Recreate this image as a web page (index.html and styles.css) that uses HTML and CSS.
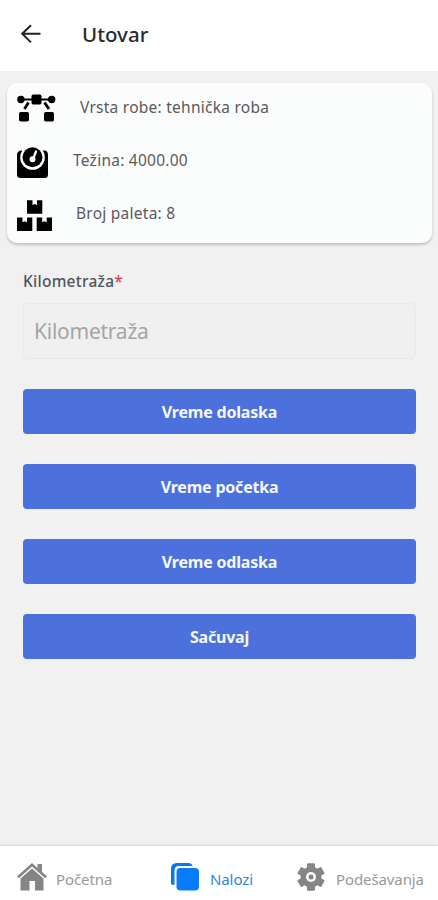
FILE: index.html
```html
<!DOCTYPE html>
<html lang="sr">
<head>
<meta charset="utf-8">
<meta name="viewport" content="width=device-width, initial-scale=1">
<title>Utovar</title>
<link rel="stylesheet" href="styles.css">
</head>
<body>
<div class="app">
  <header class="topbar">
    <svg class="back" width="22" height="20" viewBox="0 0 22 20"><path d="M11 1.2 2.2 9.8 11 18.4M2.5 9.8H20.5" fill="none" stroke="#222" stroke-width="2"/></svg>
    <h1 class="title">Utovar</h1>
  </header>
  <main class="content">
    <section class="card">
      <div class="info">
        <svg class="route" width="40" height="28" viewBox="0 0 40 28"><g stroke="#000" stroke-width="2"><path d="M4 5.500H36"/><path d="M11.500 8.500 7.500 15M27.500 8.500 32 15" stroke-width="2.800"/></g><circle cx="3.900" cy="5.500" r="3.700"/><circle cx="34.700" cy="5.500" r="3.700"/><rect x="14.500" y=".5" width="10" height="10" rx="1.700"/><rect x="2" y="18" width="10" height="9.500" rx="1.700"/><rect x="27" y="18" width="10" height="9.500" rx="1.700"/></svg>
        <span class="cargo">Vrsta robe: tehnička roba</span>
      </div>
      <div class="info">
        <svg width="32" height="32" viewBox="0 0 32 32"><path d="M4 3.500H28Q31 4 31 8V27.500Q31 31 27.500 31H3.500Q0 31 0 27.500V8Q0 4 4 3.500Z"/><circle cx="15.500" cy="10.500" r="12.300" fill="#fbfcfc"/><path d="M5 0H26V4H5Z" fill="#fbfcfc"/><circle cx="15.500" cy="10.200" r="10"/><path d="M19 4.500 16.500 11" stroke="#fbfcfc" stroke-width="2.200" stroke-linecap="round"/><circle cx="15.500" cy="12.200" r="3" fill="#fbfcfc"/></svg>
        <span class="weight">Težina: 4000.00</span>
      </div>
      <div class="info">
        <svg width="36" height="32" viewBox="0 0 36 32"><path d="M10 .3H15.500V5L17.700 4 20 5V.3H25.300V13.700H10ZM0 17.600H5.500V22.300L7.700 21.300 10 22.300V17.600H15.300V31H0ZM19.700 17.600H25.200V22.300L27.400 21.300 29.700 22.300V17.600H35V31H19.700Z"/></svg>
        <span class="pallets">Broj paleta: 8</span>
      </div>
    </section>
    <form class="form">
      <label class="label" for="km">Kilometraža<span class="required">*</span></label>
      <input class="input" id="km" type="text" placeholder="Kilometraža">
      <button class="button" type="button">Vreme dolaska</button>
      <button class="button" type="button">Vreme početka</button>
      <button class="button" type="button">Vreme odlaska</button>
      <button class="button" type="button">Sačuvaj</button>
    </form>
  </main>
  <nav class="tabs">
    <a class="tab home"><svg width="30" height="28" viewBox="0 0 30 28"><path d="M20.500 1H25V9.500L20.500 5Z"/><path d="M1 14.200 15 1.800 29 14.200" fill="none" stroke="#858585" stroke-width="2.600"/><path d="M3.500 15.500 15 5.500 26.500 15.500V27.500H18V18H12.500V27.500H3.500Z"/></svg><span>Početna</span></a>
    <a class="tab orders"><svg width="29" height="28" viewBox="0 0 29 28"><path d="M0 21V6Q0 0 6 0H17Q21 0 21.500 3H8Q3.500 3 3.500 8V22Q1 22 0 21Z" fill="#0879e8"/><rect x="5.500" y="5" width="22.500" height="22.500" rx="4"/></svg><span>Nalozi</span></a>
    <a class="tab settings"><svg width="28" height="28" viewBox="-14 -14 28 28"><circle r="10.500"/><g><rect id="tooth" x="-4" y="-13.700" width="8" height="27.400" rx="1"/><use href="#tooth" transform="rotate(60)"/><use href="#tooth" transform="rotate(120)"/></g><circle r="5" fill="#fff"/><circle r="2.500"/></svg><span>Podešavanja</span></a>
  </nav>
</div>
</body>
</html>
```
FILE: styles.css
```css
* { box-sizing: border-box; }
body { margin: 0; font-family: "Noto Sans", "Open Sans", sans-serif; background: #f1f1f1; }
.app { height: 900px; display: flex; flex-direction: column; overflow: hidden; }
.topbar { height: 71px; flex: none; background: #fff; display: flex; align-items: center; padding: 0 20px; }
.back { margin-top: -3px; }
.title { margin: -3px 0 0 40px; font-size: 20.5px; font-weight: 500; color: #2a2a2a; line-height: 28px; }
.content { flex: 1; padding: 12px 6px 0 7px; }
.card { height: 160px; border-radius: 10px; background: #fbfcfc; box-shadow: 0 2px 3px rgba(0, 0, 0, .2); padding: 0 10px; }
.info { height: 53px; display: flex; align-items: center; color: #5a5a5a; font-size: 15.5px; line-height: 22px; letter-spacing: .25px; white-space: nowrap; }
.info svg { flex: none; }
.info .route { margin-top: -3px; }
.info span { margin-top: -5px; }
.cargo { margin-left: 23px; }
.weight { margin-left: 24px; }
.pallets { margin-left: 23px; }
.form { display: flex; flex-direction: column; padding: 27px 16px 0; }
.label { font-size: 15.5px; line-height: 22px; color: #50555a; font-weight: 500; letter-spacing: .25px; }
.required { color: #e8384f; }
.input { height: 56px; margin: 11px 0 30px; border: 1px solid #e9e9e9; border-radius: 5px; background: #f0f0f0; padding: 0 10px; font-family: inherit; font-size: 21px; letter-spacing: -.25px; }
.input::placeholder { color: #a5a5a5; opacity: 1; }
.button { height: 45px; margin: 0 0 30px; padding: 0; border: 0; border-radius: 4px; background: #4c70dc; color: #f6f9ff; font-family: inherit; font-size: 16px; font-weight: 700; letter-spacing: -.2px; }
.tabs { height: 54px; flex: none; background: #fff; box-shadow: 0 -1px 2px rgba(0, 0, 0, .12); display: grid; grid-template-columns: 154px 126px auto; align-items: center; padding: 8px 0 0 17px; }
.tab { display: grid; grid-template-columns: 39px auto; align-items: center; font-size: 15px; line-height: 22px; letter-spacing: -.1px; color: #999; fill: #858585; }
.tab span { padding-top: 3px; }
.orders { color: #3186d6; fill: #087cfb; }
```
